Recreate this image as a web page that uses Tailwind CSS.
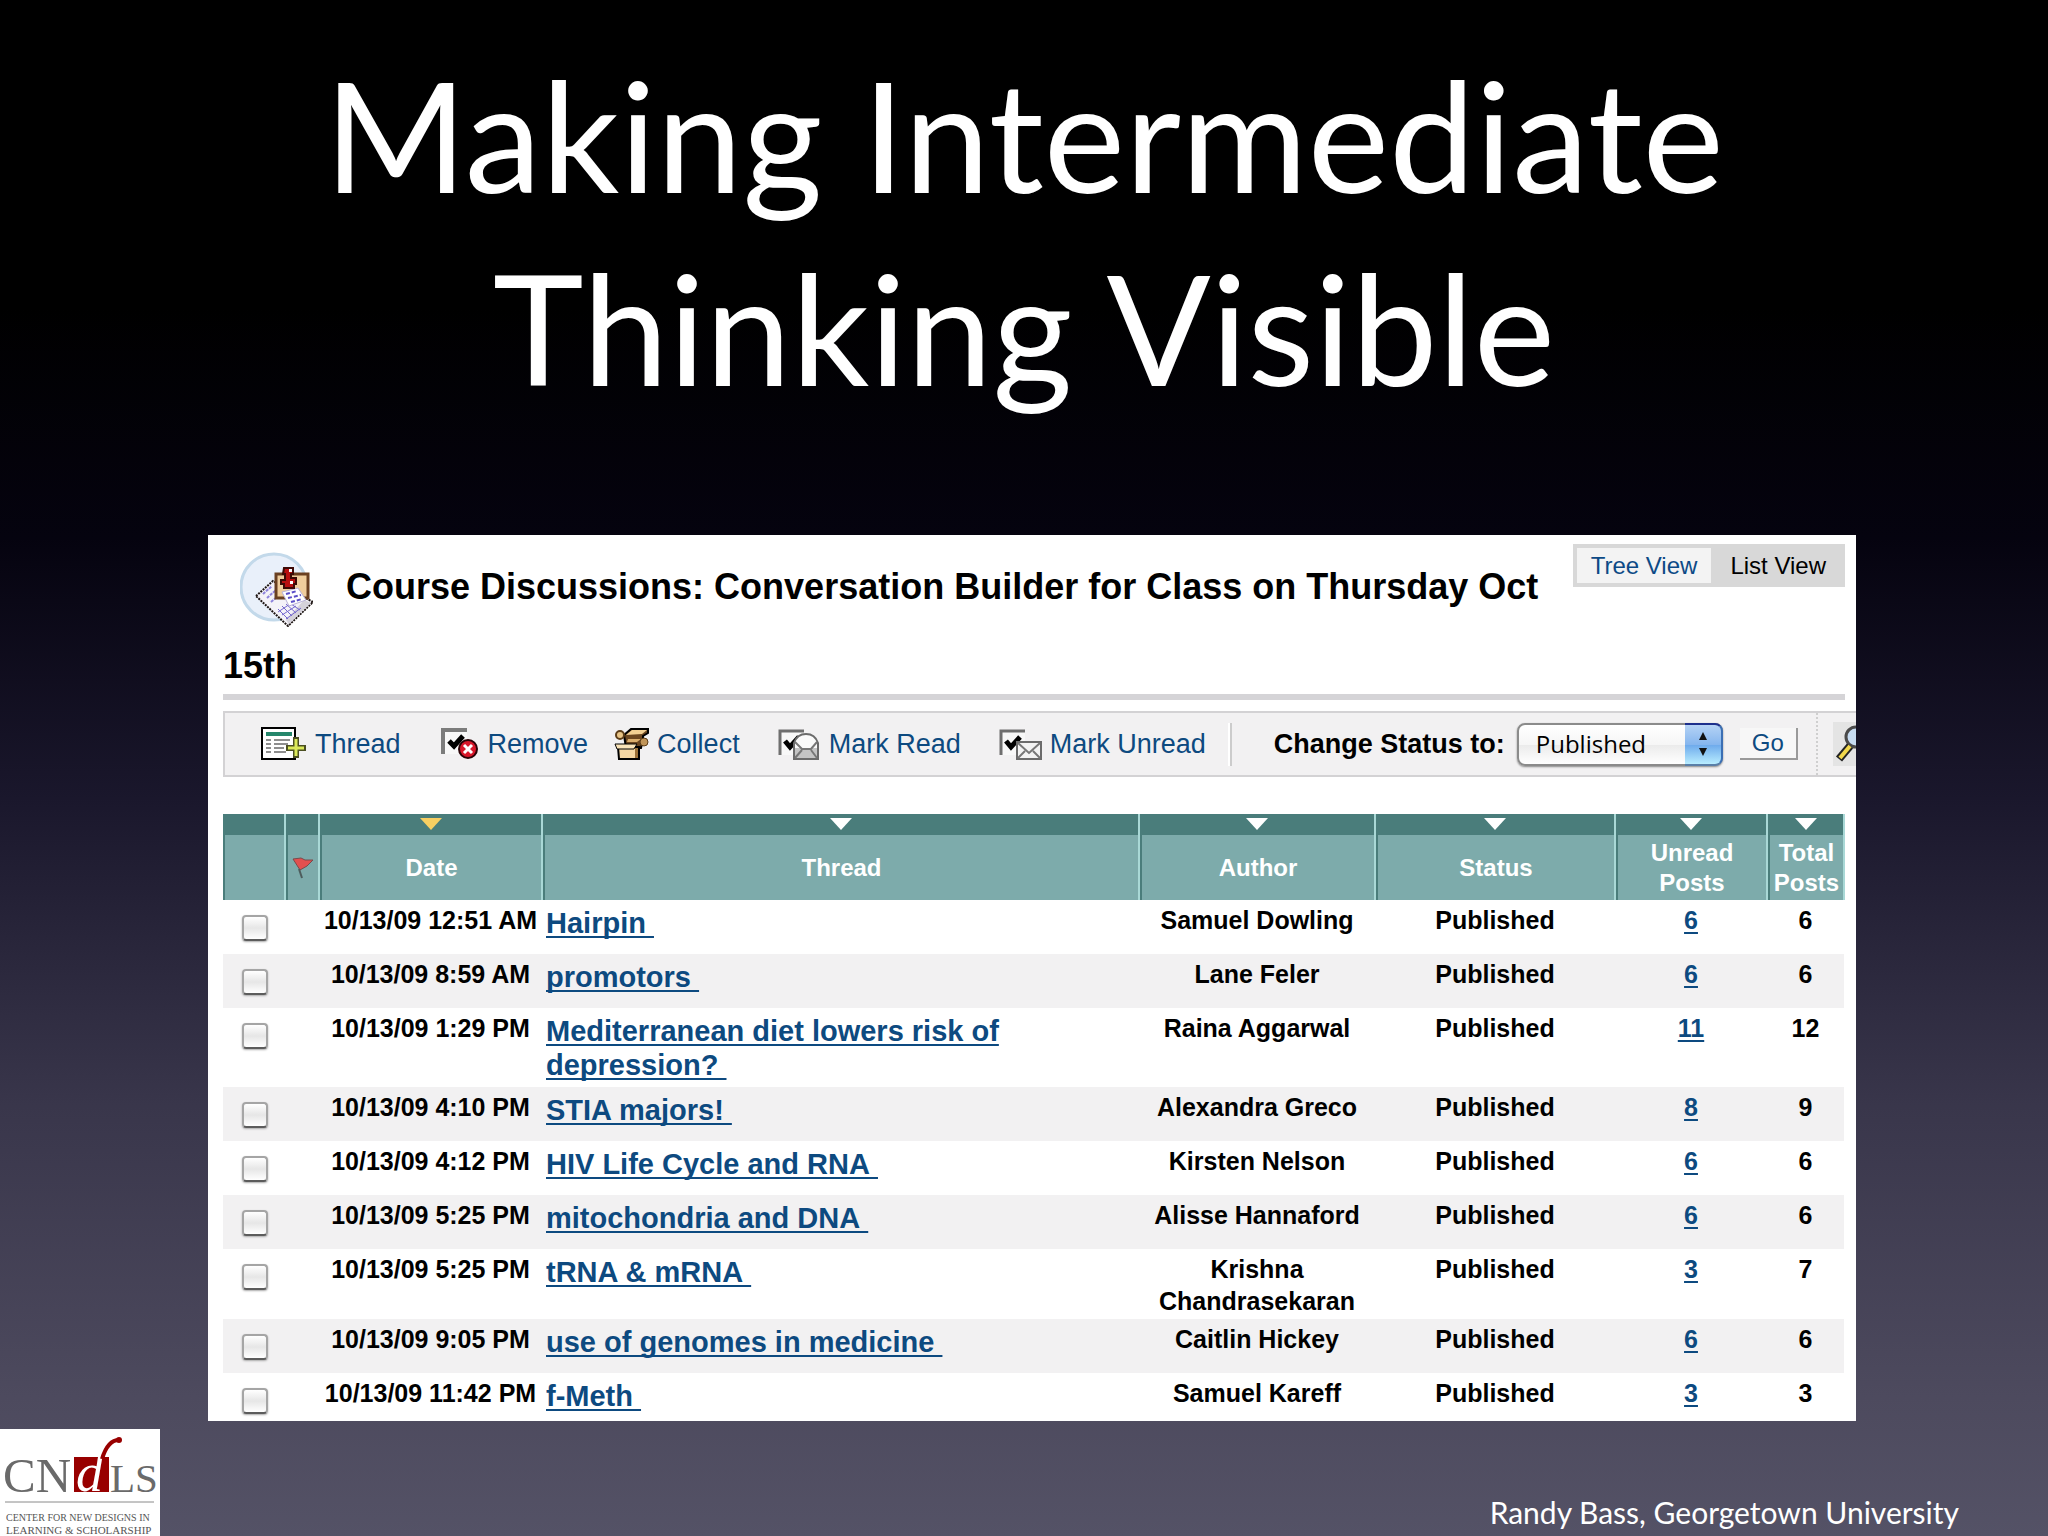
<!DOCTYPE html>
<html lang="en">

<head>
  <meta charset="UTF-8">
  <meta name="viewport" content="width=device-width, initial-scale=1.0">
  <title>Making Intermediate Thinking Visible</title>
  <script src="https://cdn.jsdelivr.net/npm/@tailwindcss/browser@4"></script>
</head>

<body class="min-h-screen flex flex-col bg-[linear-gradient(to_bottom,#000000_20%,#05030f_35%,#1a172c_52%,#39364b_72%,#4d4a5e_91%,#545266_100%)] font-['Liberation_Sans',sans-serif]">

  <!-- Slide title -->
  <header class="pt-[37px] text-center text-white">
    <h1 class="font-['Lato',sans-serif] text-[154px] leading-[193px]">Making Intermediate<br>Thinking Visible</h1>
  </header>

  <!-- Discussion board -->
  <main class="mt-[112px] ml-[208px] mr-[192px] bg-white pt-[9px] pl-[15px] overflow-hidden text-black">
    <div class="mr-[11px] border-b-6 border-[#d5d4d7] pb-2">
      <nav class="float-right flex bg-[#d8d8d8] p-1 pr-0 text-[24px] leading-[35px]">
        <a href="#" class="bg-[#f3f3f3] px-[14px] text-[#0d4a86]">Tree View</a>
        <span class="px-[19px]">List View</span>
      </nav>
      <h2 class="pt-2 text-[36px] leading-[40px] font-bold">
        <svg class="inline-block w-[73px] h-[75px] ml-[17px] mr-[23px] mb-[19px] align-[-47px]" viewBox="0 0 73 75">
          <circle cx="34" cy="35" r="33" fill="#e9f0fa" stroke="#c3d9ea" stroke-width="3" />
          <path d="M16 44 L33 29 L73 50 L48 74 Z" fill="#f4f2f8" stroke="#1c1412" stroke-width="2" stroke-dasharray="2 1" />
          <path d="M49 72 L71 51 L64 48 L46 68 Z" fill="#d5d2da" />
          <path d="M23 42 l9 -8 M27 46 l9 -8 M31 50 l7 -6" stroke="#8d82dc" stroke-width="2" stroke-dasharray="3 1" />
          <path d="M38 57 L48 67 M42 54 L52 64 M46 52 L56 61 M51 52 L60 58 M38 60 L50 52 M42 63 L56 54 M46 67 L61 56" stroke="#7467cf" stroke-width="1" />
          <rect x="36" y="22" width="32" height="24" fill="#efcd9c" stroke="#6a4021" stroke-width="3" />
          <path d="M42 40 L58 36 L66 48 L49 54 Z" fill="#fff" stroke="#b9b2d8" />
          <path d="M46 42 l11 -3 M48 46 l13 -3 M51 50 l11 -3" stroke="#5b4fc8" stroke-width="2" stroke-dasharray="4 2" />
          <path d="M44 16 H53 V22 H51 V26 H56 V32 H54 V36 H44 V32 H41 V28 H45 V22 H43 Z" fill="#b80f0f" stroke="#3c0a06" stroke-width="2" />
          <path d="M49 17 h3 v3 h-3 z M50 29 h3 v3 h-3 z" fill="#fff" />
        </svg>
        Course Discussions: Conversation Builder for Class on Thursday Oct 15th
      </h2>
    </div>

    <!-- Toolbar -->
    <div class="mt-[11px] h-[66px] flex items-center border-2 border-r-0 border-[#d3d2d4] bg-[#f2f1f2] pl-[36px] text-[27px] leading-[32px] whitespace-nowrap text-[#0d4a80]">
      <a href="#" class="flex-none flex items-center gap-2">
        <svg class="w-[46px] h-[34px]" viewBox="0 0 46 34">
          <path d="M1 1 H34 V32 H1 Z" fill="#fff" stroke="#000" stroke-width="2" />
          <path d="M5 5 H31 V9 H5 Z" fill="#25866b" />
          <path d="M5 13 h5 M13 13 h16 M5 17 h5 M13 17 h14 M5 21 h5 M13 21 h10 M5 25 h5 M13 25 h12" stroke="#8e8e8e" stroke-width="2" />
          <path d="M32 10 h6 v8 h7 v6 h-7 v7 h-6 v-7 h-7 v-6 h7 z" fill="#4b4f22" />
          <path d="M35 12 v17 M27 21 h16" stroke="#dbe95a" stroke-width="3" />
        </svg>
        Thread
      </a>
      <a href="#" class="flex-none flex items-center gap-[10px] ml-[40px]">
        <svg class="w-[37px] h-[32px]" viewBox="0 0 37 32">
          <path d="M1 1 H26 V26 H1 Z" fill="#f8f8f8" />
          <path d="M2 26 V2 H26" fill="none" stroke="#7c7c7c" stroke-width="4" />
          <path d="M8 13 L13 18 L22 8" fill="none" stroke="#000" stroke-width="5" />
          <circle cx="27" cy="21" r="9" fill="#d8172a" stroke="#2a0206" stroke-width="2" />
          <path d="M23 17 l8 8 M31 17 l-8 8" stroke="#fff" stroke-width="3" />
        </svg>
        Remove
      </a>
      <a href="#" class="flex-none flex items-center gap-2 ml-[26px]">
        <svg class="w-[35px] h-[33px]" viewBox="0 0 35 33">
          <path d="M10 7 L17 1 H34 V5 L29 8 V12 L27 20 H12 Z" fill="#6b4620" stroke="#000" stroke-width="2" />
          <path d="M12 7 L18 2 H33 L28 6 Z" fill="#f1cf93" />
          <path d="M14 11 H27 L23 14 H13 Z" fill="#d9ad6c" />
          <circle cx="6" cy="7" r="4" fill="#e9c587" stroke="#5c3d18" stroke-width="2" />
          <circle cx="30" cy="14" r="4" fill="#c09458" stroke="#5c3d18" stroke-width="1" />
          <path d="M4 19 H25 V31 H5 Z" fill="#f5d7a2" stroke="#000" stroke-width="2" />
          <path d="M1 16 H23 L20 21 H3 Z" fill="#fae4b9" stroke="#000" stroke-width="1" />
          <path d="M21 20 h3 v10 h-3 z" fill="#9c7037" />
        </svg>
        Collect
      </a>
      <a href="#" class="flex-none flex items-center gap-[10px] ml-[38px]">
        <svg class="w-[41px] h-[31px]" viewBox="0 0 41 31">
          <path d="M1 1 H26 V26 H1 Z" fill="#f8f8f8" />
          <path d="M2 26 V2 H26" fill="none" stroke="#6f6f6f" stroke-width="3" />
          <path d="M7 12 L12 18 L21 8" fill="none" stroke="#000" stroke-width="5" />
          <path d="M16 14 Q19 5 28 5 Q37 5 40 14 V30 H16 Z" fill="#fafafa" stroke="#6b6b6b" stroke-width="2" />
          <path d="M17 19 H39 V29 H17 Z" fill="#c4c4c4" />
          <path d="M17 13 L24 20 H33 L39 13 M17 29 L24 21 M39 29 L33 21" fill="none" stroke="#777" stroke-width="2" />
        </svg>
        Mark Read
      </a>
      <a href="#" class="flex-none flex items-center gap-2 ml-[38px]">
        <svg class="w-[43px] h-[31px]" viewBox="0 0 43 31">
          <path d="M1 1 H26 V26 H1 Z" fill="#f8f8f8" />
          <path d="M2 26 V2 H26" fill="none" stroke="#6f6f6f" stroke-width="3" />
          <path d="M7 12 L12 18 L21 8" fill="none" stroke="#000" stroke-width="5" />
          <path d="M18 13 H42 V30 H18 Z" fill="#f3f3f3" stroke="#6b6b6b" stroke-width="2" />
          <path d="M19 14 L30 24 L41 14 M19 29 L26 22 M41 29 L34 22" fill="none" stroke="#777" stroke-width="2" />
        </svg>
        Mark Unread
      </a>
      <div class="flex-none ml-[22px] w-1 h-[43px] border-l-2 border-r-2 border-l-white border-r-[#cccccc]"></div>
      <label for="status" class="flex-none ml-[42px] font-bold text-black">Change Status to:</label>
      <div class="flex-none relative ml-3">
        <select id="status" class="block appearance-none w-[206px] h-[43px] rounded-lg border-2 border-[#8b8b8b] bg-[linear-gradient(to_bottom,#ffffff_0%,#f6f6f6_50%,#ebebeb_52%,#ffffff_100%)] pl-[17px] shadow-[0_1px_2px_#888888] font-['Open_Sans',sans-serif] text-[24px] leading-[36px] text-black">
          <option>Published</option>
        </select>
        <!-- stepper arrows -->
        <div class="absolute right-0 top-0 w-[38px] h-[43px] rounded-r-lg border-t-2 border-r-2 border-b-2 border-t-[#1d2f8c] border-r-[#3b6fb4] border-b-[#5a7fa8] bg-[linear-gradient(to_bottom,#b5d3f5_0%,#86b6ee_50%,#6fabec_52%,#b8edff_100%)] flex items-center justify-center pointer-events-none">
          <svg class="w-2 h-[24px]" viewBox="0 0 8 24">
            <path d="M4 0 L8 8 H0 Z M4 24 L0 16 H8 Z" fill="#111" />
          </svg>
        </div>
      </div>
      <button type="button" class="flex-none ml-[17px] w-[58px] h-[32px] border-r-2 border-b-2 border-[#9a9a9a] bg-[#f7f7f7] text-[24px] leading-[30px]">Go</button>
      <div class="flex-none ml-[18px] w-0 h-full border-l-2 border-dotted border-[#cfcfcf]"></div>
      <button type="button" aria-label="Search" class="flex-none ml-[15px] w-[44px] h-[44px] bg-[#e4e4e4]">
        <svg class="w-[44px] h-[44px]" viewBox="0 0 44 44">
          <circle cx="23" cy="15" r="10" fill="#c7dcf2" stroke="#4a4a4a" stroke-width="3" />
          <path d="M6 37 L17 24" stroke="#222" stroke-width="8" />
          <path d="M7 36 L17 24" stroke="#f2d84c" stroke-width="4" />
        </svg>
      </button>
    </div>

    <!-- Threads -->
    <div class="mt-[37px] mr-[11px]">
      <table class="w-full table-fixed border-collapse font-bold text-[25px]">
        <colgroup>
          <col class="w-[62px]">
          <col class="w-[34px]">
          <col class="w-[223px]">
          <col>
          <col class="w-[236px]">
          <col class="w-[240px]">
          <col class="w-[152px]">
          <col class="w-[77px]">
        </colgroup>
        <thead>
          <tr id="headRow" class="bg-[#7dabab] text-white text-[24px] leading-[30px]"></tr>
        </thead>
        <tbody id="threadList"></tbody>
      </table>
    </div>
  </main>

  <!-- Slide footer -->
  <footer class="mt-auto flex items-end justify-between">
    <svg class="w-[160px] h-[107px] bg-white font-['Liberation_Serif',serif]" viewBox="0 0 160 107">
      <text x="3" y="63" font-size="49" fill="#6a6a6a">CN</text>
      <path d="M74 28 H109 V63 H74 Z" fill="#980000" />
      <text x="76" y="62" font-size="54" font-style="italic" fill="#ffffff">d</text>
      <!-- swash above the red square -->
      <path d="M102 30 C105 20 110 11 119 11" fill="none" stroke="#980000" stroke-width="4" />
      <circle cx="119" cy="11" r="3" fill="#980000" />
      <text x="110" y="63" font-size="41" fill="#6a6a6a">LS</text>
      <path d="M5 73 H154" stroke="#8a8a8a" stroke-width="1" />
      <text x="6" y="92" font-size="10" fill="#555555">CENTER FOR NEW DESIGNS IN</text>
      <text x="6" y="105" font-size="11" fill="#555555">LEARNING &amp; SCHOLARSHIP</text>
    </svg>
    <p class="pr-[89px] pb-1 font-['Lato',sans-serif] text-[30px] leading-[40px] text-white">Randy Bass, Georgetown University</p>
  </footer>

  <script>
    const columns = [
      { label: "" },
      { flag: true },
      { label: "Date", arrow: "#f8cf62" },
      { label: "Thread", arrow: "#ffffff" },
      { label: "Author", arrow: "#ffffff" },
      { label: "Status", arrow: "#ffffff" },
      { label: "Unread Posts", arrow: "#ffffff" },
      { label: "Total Posts", arrow: "#ffffff" },
    ];

    const flagIcon = `
      <svg class="w-[22px] h-[22px]" viewBox="0 0 22 22">
        <path d="M1 2 L9 1 L13 3 L21 3 L15 9 L8 13 Z" fill="#e2504f" stroke="#7a4a4c" stroke-width="1" />
        <path d="M7 12 L10 21" stroke="#4d5c5c" stroke-width="2" />
      </svg>`;

    document.getElementById("headRow").innerHTML = columns.map(col => `
      <th class="p-0 border-r-2 border-[#a9d8d6]">
        <div class="h-[21px] bg-[#4a7d7b] flex justify-center pt-1">
          ${col.arrow ? `<svg class="w-[22px] h-[12px]" viewBox="0 0 22 12"><path d="M0 0 H22 L11 12 Z" fill="${col.arrow}" /></svg>` : ""}
        </div>
        <div class="h-[65px] border-l-2 border-[#4a7d7b] flex items-center justify-center">${col.flag ? flagIcon : col.label}</div>
      </th>`).join("");

    const threads = [
      { date: "10/13/09 12:51 AM", title: "Hairpin", author: "Samuel Dowling", unread: 6, total: 6 },
      { date: "10/13/09 8:59 AM", title: "promotors", author: "Lane Feler", unread: 6, total: 6 },
      { date: "10/13/09 1:29 PM", title: "Mediterranean diet lowers risk of depression?", author: "Raina Aggarwal", unread: 11, total: 12 },
      { date: "10/13/09 4:10 PM", title: "STIA majors!", author: "Alexandra Greco", unread: 8, total: 9 },
      { date: "10/13/09 4:12 PM", title: "HIV Life Cycle and RNA", author: "Kirsten Nelson", unread: 6, total: 6 },
      { date: "10/13/09 5:25 PM", title: "mitochondria and DNA", author: "Alisse Hannaford", unread: 6, total: 6 },
      { date: "10/13/09 5:25 PM", title: "tRNA & mRNA", author: "Krishna Chandrasekaran", unread: 3, total: 7 },
      { date: "10/13/09 9:05 PM", title: "use of genomes in medicine", author: "Caitlin Hickey", unread: 6, total: 6 },
      { date: "10/13/09 11:42 PM", title: "f-Meth", author: "Samuel Kareff", unread: 3, total: 3 },
    ];

    const linkClass = "text-[#0d4a80] underline decoration-2 underline-offset-[3px] [text-decoration-skip-ink:none]";

    document.getElementById("threadList").innerHTML = threads.map(t => `
      <tr class="h-[54px] last:h-[48px] even:bg-[#f2f1f2] align-top text-center leading-[32px]">
        <td class="p-0 pt-[15px] pl-[19px]">
          <input type="checkbox" aria-label="Select ${t.title}" class="block appearance-none w-[26px] h-[26px] rounded-sm border-2 border-[#a5a5a5] border-b-[#5c5c5c] bg-[linear-gradient(to_bottom,#ffffff,#e6e6e6_50%,#ffffff)] shadow-[0_1px_2px_#aaaaaa]">
        </td>
        <td class="p-0"></td>
        <td class="p-0 pt-1 whitespace-nowrap">${t.date}</td>
        <td class="p-0 pt-[6px] pb-[5px] pl-1 pr-[120px] text-left text-[29px] leading-[34px]"><a href="#" class="${linkClass}">${t.title.replace("&", "&amp;")}&nbsp;</a></td>
        <td class="px-2 pt-1 pb-[2px]">${t.author}</td>
        <td class="p-0 pt-1">Published</td>
        <td class="p-0 pt-1"><a href="#" class="${linkClass}">${t.unread}</a></td>
        <td class="p-0 pt-1">${t.total}</td>
      </tr>`).join("");
  </script>
</body>

</html>
